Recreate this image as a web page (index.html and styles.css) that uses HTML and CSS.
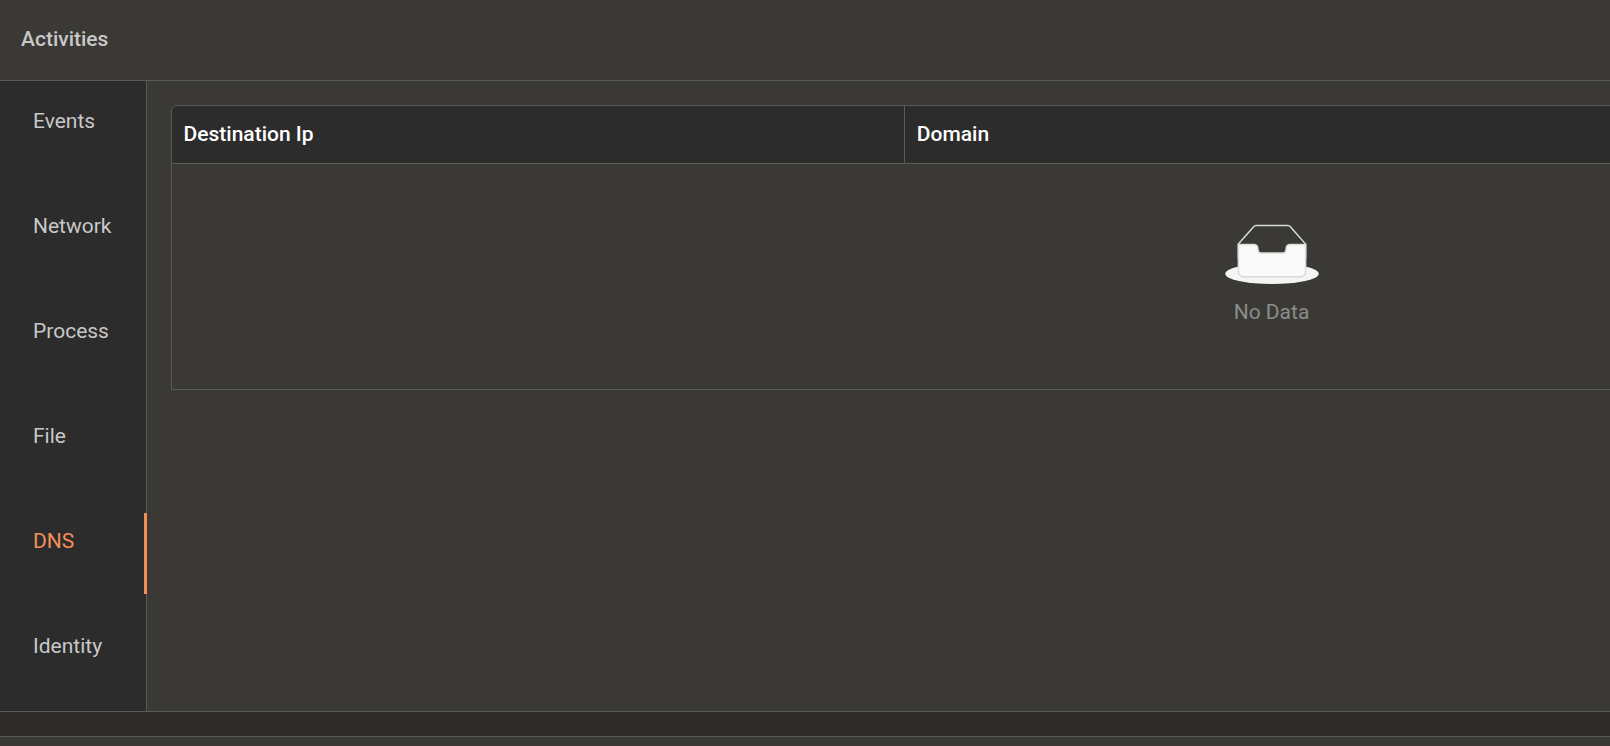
FILE: index.html
```html
<!DOCTYPE html>
<html lang="en">
<head>
    <meta charset="UTF-8">
    <title>Activities</title>
    <link rel="stylesheet" href="styles.css">
</head>
<body>
<section class="card">
    <header class="card-head">
        <h1>Activities</h1>
    </header>
    <div class="card-body">
        <nav class="tabs">
            <a class="tab" href="#events">Events</a>
            <a class="tab" href="#network">Network</a>
            <a class="tab" href="#process">Process</a>
            <a class="tab" href="#file">File</a>
            <a class="tab active" href="#dns" aria-current="page">DNS</a>
            <a class="tab" href="#identity">Identity</a>
        </nav>
        <main class="content">
            <div class="table-wrap">
                <table>
                    <thead>
                    <tr>
                        <th scope="col">Destination Ip</th>
                        <th scope="col">Domain</th>
                        <td></td>
                    </tr>
                    </thead>
                    <tbody>
                    <tr>
                        <td class="empty" colspan="3">
                            <svg class="empty-icon" viewBox="0 0 64 41" aria-hidden="true">
                                <g transform="translate(0 1)" fill="none">
                                    <ellipse fill="#f5f5f5" cx="32" cy="33" rx="32" ry="7"/>
                                    <g stroke="#d9d9d9">
                                        <path d="M55 12.76L44.854 1.258C44.367.474 43.656 0 42.907 0H21.093c-.749 0-1.46.474-1.947 1.257L9 12.761V22h46v-9.24z"/>
                                        <path fill="#fafafa" d="M41.613 15.931c0-1.605.994-2.93 2.227-2.931H55v18.137C55 33.26 53.68 35 52.05 35h-40.1C10.32 35 9 33.259 9 31.137V13h11.16c1.233 0 2.227 1.323 2.227 2.928v.022c0 1.605 1.005 2.901 2.237 2.901h14.752c1.232 0 2.237-1.308 2.237-2.913v-.007z"/>
                                    </g>
                                </g>
                            </svg>
                            <p>No Data</p>
                        </td>
                    </tr>
                    </tbody>
                </table>
            </div>
        </main>
    </div>
</section>
<section class="card next"></section>
</body>
</html>
```

FILE: styles.css
```css
* {
    box-sizing: border-box;
}

body {
    display: flex;
    flex-direction: column;
    gap: 24px;
    min-height: 100vh;
    margin: 0;
    overflow-x: hidden;
    background-color: #2c2b28;
    color: #c8c8c8;
    font-family: Roboto, "Liberation Sans", sans-serif;
    font-size: 21px;
    line-height: 32px;
}

.card {
    background-color: #3b3935;
    border-bottom: 1px solid #5a5a5a;
}

.card.next {
    flex: 1;
    border-top: 1px solid #5a5a5a;
    border-bottom: none;
}

.card-head {
    padding: 23px 21px 25px;
    border-bottom: 1px solid #5a5a5a;
}

.card-head h1 {
    margin: 0;
    font-size: 21px;
    font-weight: 500;
}

.card-body {
    display: flex;
}

.tabs {
    display: flex;
    flex-direction: column;
    gap: 24px;
    flex: none;
    padding-bottom: 24px;
    background-color: #2c2c2c;
    border-right: 1px solid #5a5a5a;
}

.tab {
    position: relative;
    padding: 24px 34px 25px 33px;
    color: inherit;
    text-decoration: none;
}

.tab.active {
    color: #f48f56;
}

/* marker of the open tab, lies over the border */
.tab.active::after {
    content: "";
    position: absolute;
    top: 12px;
    right: -1px;
    width: 3px;
    height: 100%;
    background-color: #f48f56;
}

.content {
    flex: 1;
    min-width: 0;
    padding: 24px 0 24px 24px;
    overflow: hidden;
}

.table-wrap {
    min-width: 2202px;
    border: 1px solid #5a5a5a;
    border-radius: 6px 6px 0 0;
    overflow: hidden;
}

table {
    width: 100%;
    table-layout: fixed;
    border-collapse: separate;
    border-spacing: 0;
}

thead th,
thead td {
    padding: 12px 12px 13px;
    background-color: #2c2c2c;
    border-right: 1px solid #5a5a5a;
    border-bottom: 1px solid #5a5a5a;
    color: #fff;
    font-weight: 500;
    text-align: left;
}

.empty {
    padding: 60px 12px 61px;
    color: #8c8c8c;
    text-align: center;
}

.empty-icon {
    display: block;
    width: 94px;
    height: 60px;
    margin: 0 auto 12px;
}

.empty p {
    margin: 0;
}
```
